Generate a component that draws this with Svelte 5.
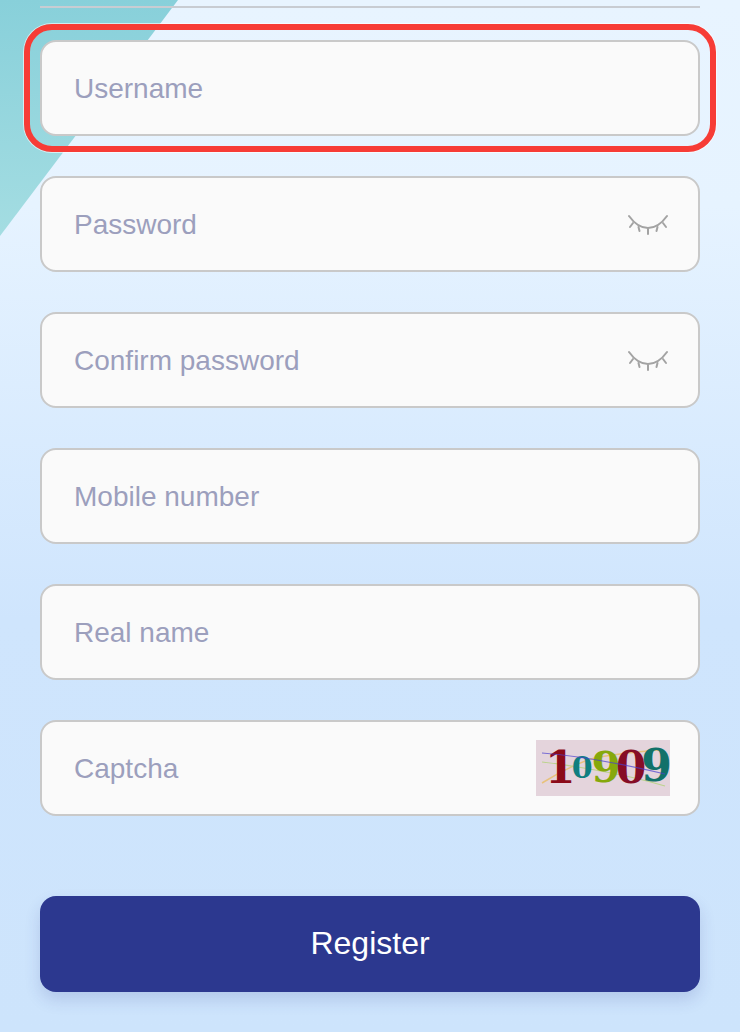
<script>
  const fields = [
    { name: 'username', placeholder: 'Username', highlight: true },
    { name: 'password', placeholder: 'Password', eye: true },
    { name: 'confirm', placeholder: 'Confirm password', eye: true },
    { name: 'mobile', placeholder: 'Mobile number' },
    { name: 'realname', placeholder: 'Real name' },
    { name: 'captcha', placeholder: 'Captcha', captcha: true }
  ];
</script>

<main>
  <div class="corner"></div>
  <div class="divider"></div>
  <form on:submit|preventDefault>
    {#each fields as field}
      <div class="field" class:highlight={field.highlight}>
        <input name={field.name} placeholder={field.placeholder} />
        {#if field.eye}
          <svg class="eye" width="40" height="24" viewBox="0 0 40 24" fill="none" stroke="#a3a3a3" stroke-width="2" stroke-linecap="round">
            <path d="M1 4C6 11 13 16 20 16s14-5 19-12" />
            <path d="M5 11l-3 4M10.500 15l1 4M20 17v5M29.500 15l-1 4M35 11l3 4" />
          </svg>
        {/if}
        {#if field.captcha}
          <div class="captcha">
            <svg class="noise" width="134" height="56" viewBox="0 0 134 56" fill="none">
              <path d="M6 43C30 28 50 20 59 18s40-6 63-8" stroke="#e8c27c" stroke-width="1.500" />
              <path d="M6 22c18 2 36 5 53 8s50 10 70 16" stroke="#bcd38d" stroke-width="1.200" />
            </svg>
            <span class="d d1">1</span><span class="d d2">0</span><span class="d d3">9</span><span class="d d4">0</span><span class="d d5">9</span>
            <svg class="noise" width="134" height="56" viewBox="0 0 134 56" fill="none">
              <path d="M6 13c40 3 85 12 123 21" stroke="#4a3fd0" stroke-width="1.200" opacity="0.7" />
            </svg>
          </div>
        {/if}
      </div>
    {/each}
    <button type="submit">Register</button>
  </form>
</main>

<style>
  :global(body) {
    margin: 0;
  }
  main {
    position: relative;
    box-sizing: border-box;
    height: 1032px;
    padding: 6px 40px 0;
    overflow: hidden;
    font-family: "Liberation Sans", Arial, sans-serif;
    background: linear-gradient(180deg, #e8f4ff 0%, #e6f3ff 20%, #cfe5fd 60%, #cde4fc 100%);
  }
  .corner {
    position: absolute;
    top: 0;
    left: 0;
    width: 178px;
    height: 236px;
    background: linear-gradient(180deg, #88d0da, #a4dde2);
    clip-path: polygon(0 0, 100% 0, 0 100%);
  }
  .divider {
    position: relative;
    height: 2px;
    background: #c8ccd2;
  }
  form {
    position: relative;
    display: flex;
    flex-direction: column;
    gap: 40px;
    padding-top: 32px;
  }
  .field {
    position: relative;
    display: flex;
    align-items: center;
    box-sizing: border-box;
    height: 96px;
    background: #fafafa;
    border: 2px solid #c9c9c9;
    border-radius: 16px;
  }
  .highlight::after {
    content: "";
    position: absolute;
    inset: -18px;
    border: 6px solid #f73c36;
    border-radius: 28px;
    box-shadow: 0 0 0 1px rgba(255, 255, 255, 0.6);
    pointer-events: none;
  }
  input {
    flex: 1;
    min-width: 0;
    height: 100%;
    box-sizing: border-box;
    padding: 2px 32px 0;
    border: none;
    outline: none;
    background: transparent;
    font: 28px "Liberation Sans", Arial, sans-serif;
    color: #333;
  }
  input::placeholder {
    color: #9c9fbd;
    opacity: 1;
  }
  .eye {
    flex: none;
    margin-right: 30px;
  }
  .captcha {
    position: relative;
    flex: none;
    display: flex;
    align-items: center;
    box-sizing: border-box;
    width: 134px;
    height: 56px;
    margin-right: 28px;
    padding-left: 9px;
    background: #e4d4dc;
    font-family: "DejaVu Serif", "Liberation Serif", serif;
    font-weight: 700;
    line-height: 1;
    letter-spacing: -4px;
  }
  .noise {
    position: absolute;
    top: 0;
    left: 0;
  }
  .d {
    position: relative;
  }
  .d1 {
    font-size: 44px;
    color: #8b0a18;
  }
  .d2 {
    font-size: 30px;
    letter-spacing: -1px;
    color: #0f7f80;
  }
  .d3 {
    font-size: 42px;
    letter-spacing: -5px;
    color: #86a80c;
  }
  .d4 {
    font-size: 44px;
    letter-spacing: -5px;
    color: #860d26;
  }
  .d5 {
    font-size: 44px;
    color: #127169;
    top: -2px;
  }
  button {
    height: 96px;
    margin-top: 40px;
    padding: 0 0 2px;
    border: none;
    border-radius: 16px;
    background: #2c388f;
    color: #fff;
    font: 32px "Liberation Sans", Arial, sans-serif;
    box-shadow: 0 8px 16px rgba(44, 56, 143, 0.16);
    cursor: pointer;
  }
</style>
